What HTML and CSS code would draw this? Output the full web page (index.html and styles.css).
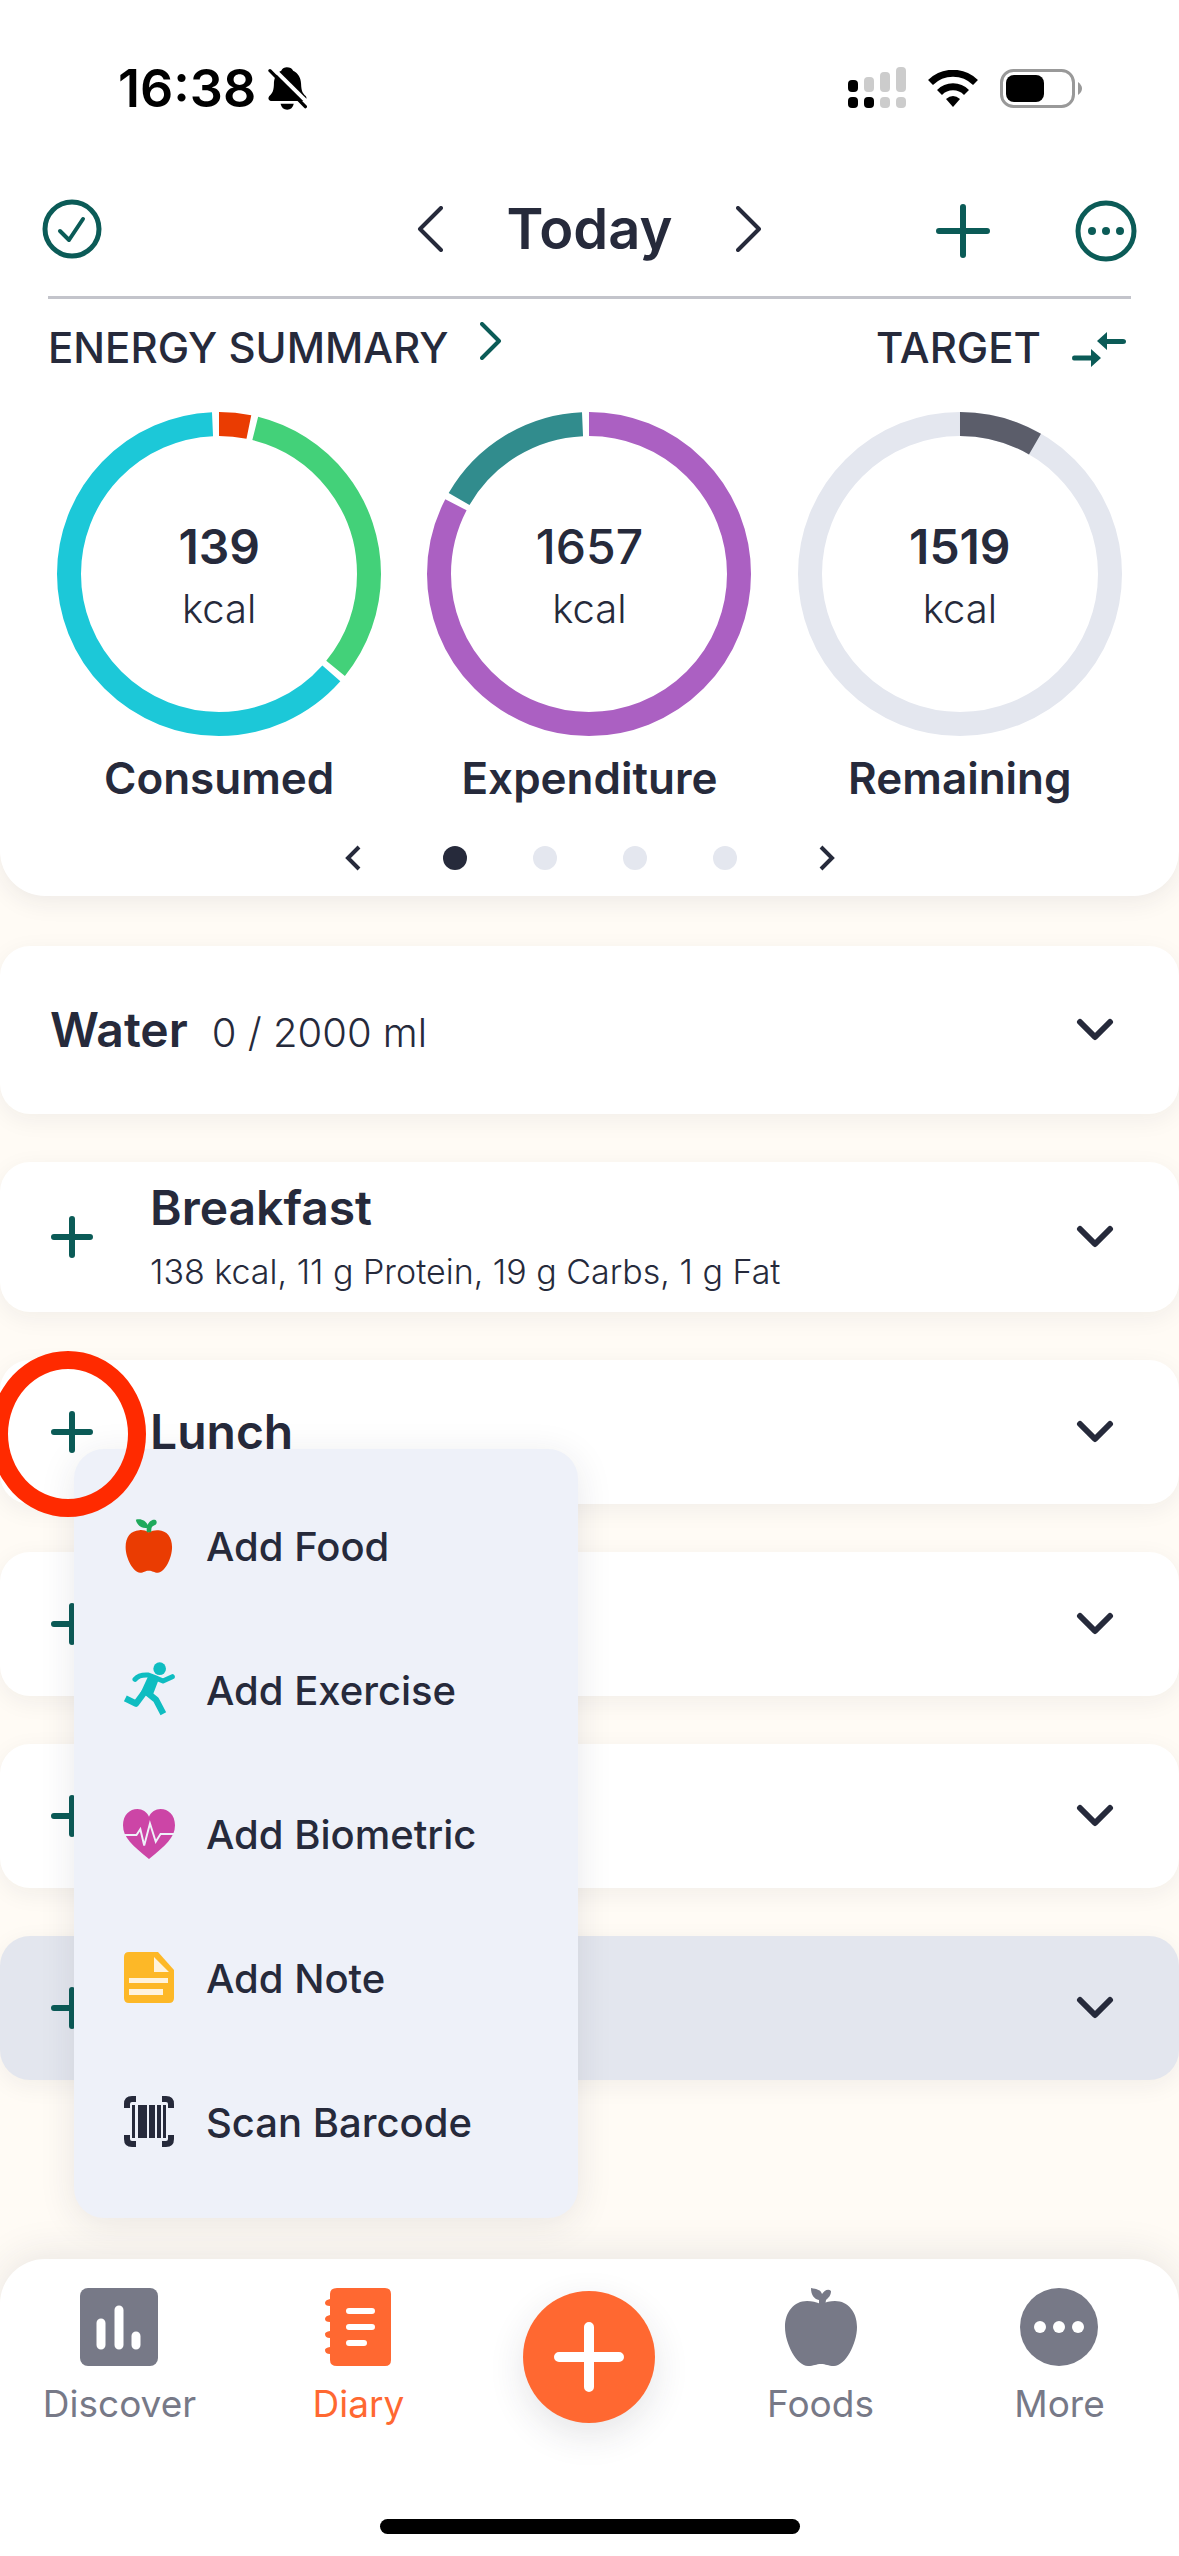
FILE: index.html
```
<!DOCTYPE html>
<html lang="en">
<head>
    <meta charset="UTF-8">
    <meta name="viewport" content="width=device-width, initial-scale=1.0">
    <title>Diary</title>
    <link rel="stylesheet" href="styles.css">
</head>
<body>
    <header class="summary">
        <div class="status-bar">
            <div class="status-left">
                <span class="time">16:38</span>
                <svg width="39" height="43" viewBox="0 0 118 130">
                    <path d="M57 1C66 1 72 4 76 11C92 19 99 33 100 50C101 74 104 78 114 88Q121 98 108 103H8Q-3 98 4 88C14 78 18 72 18 46C20 28 28 17 40 11C44 4 50 1 57 1Z"/>
                    <path d="M38 111H78Q74 129 58 129Q42 129 38 111Z"/>
                    <path d="M12 1L120 108" stroke="#fff" stroke-width="12"/>
                    <path d="M6 11L113 120" stroke="#000" stroke-width="10" stroke-linecap="round"/>
                </svg>
            </div>
            <div class="status-right">
                <svg width="58" height="42" viewBox="0 0 58 42">
                    <g fill="#ccc">
                        <rect x="16" y="10" width="10" height="15" rx="4"/>
                        <rect x="32" y="5" width="10" height="20" rx="4"/>
                        <rect x="48" y="0" width="10" height="25" rx="4"/>
                        <rect x="32" y="30" width="10" height="11" rx="4"/>
                        <rect x="48" y="30" width="10" height="11" rx="4"/>
                    </g>
                    <rect x="0" y="13" width="10" height="12" rx="4"/>
                    <rect x="0" y="30" width="10" height="11" rx="4"/>
                    <rect x="16" y="30" width="10" height="11" rx="4"/>
                </svg>
                <svg width="50" height="37" viewBox="0 0 50 37">
                    <path d="M2.500 12.500A32 32 0 0 1 47.500 12.500" fill="none" stroke="#000" stroke-width="7"/>
                    <path d="M11.500 22.500A19 19 0 0 1 38.500 22.500" fill="none" stroke="#000" stroke-width="7"/>
                    <path d="M18 29Q25 23 32 29L25 37Z"/>
                </svg>
                <svg width="83" height="39" viewBox="0 0 83 39">
                    <rect x="1.500" y="1.500" width="72" height="36" rx="12" fill="none" stroke="#999" stroke-width="3"/>
                    <rect x="6" y="6" width="38" height="27" rx="8"/>
                    <path d="M78 13Q82 16 82 19.500Q82 23 78 26Z" fill="#999"/>
                </svg>
            </div>
        </div>

        <div class="toolbar">
            <button class="icon-button" aria-label="Mark day complete">
                <svg width="60" height="60" viewBox="0 0 60 60" fill="none" stroke="#0b5b57" stroke-width="4" stroke-linecap="round" stroke-linejoin="round">
                    <circle cx="30" cy="30" r="27" stroke-width="5"/>
                    <path d="M18 32L27 41L41 20"/>
                </svg>
            </button>
            <div class="day-picker">
                <button class="icon-button" aria-label="Previous day">
                    <svg width="26" height="46" viewBox="0 0 26 46" fill="none" stroke="#262a3b" stroke-width="4" stroke-linecap="round" stroke-linejoin="round"><path d="M24 2L3 23L24 44"/></svg>
                </button>
                <h1>Today</h1>
                <button class="icon-button" aria-label="Next day">
                    <svg width="26" height="46" viewBox="0 0 26 46" fill="none" stroke="#262a3b" stroke-width="4" stroke-linecap="round" stroke-linejoin="round"><path d="M2 2L23 23L2 44"/></svg>
                </button>
            </div>
            <div class="toolbar-actions">
                <button class="icon-button" aria-label="Add">
                    <svg width="54" height="54" viewBox="0 0 54 54" stroke="#0b5b57" stroke-width="6" stroke-linecap="round"><path d="M27 3V51M3 27H51"/></svg>
                </button>
                <button class="icon-button" aria-label="More options">
                    <svg width="62" height="62" viewBox="0 0 62 62" fill="#0b5b57">
                        <circle cx="31" cy="31" r="28" fill="none" stroke="#0b5b57" stroke-width="5"/>
                        <circle cx="17" cy="31" r="4"/><circle cx="31" cy="31" r="4"/><circle cx="45" cy="31" r="4"/>
                    </svg>
                </button>
            </div>
        </div>
        <hr class="divider">

        <div class="summary-head">
            <a class="summary-link" href="#">ENERGY SUMMARY
                <svg class="raised" width="22" height="38" viewBox="0 0 22 38" fill="none" stroke="#0b5b57" stroke-width="4" stroke-linecap="round" stroke-linejoin="round"><path d="M2 2L19 19L2 36"/></svg>
            </a>
            <button class="target-button">TARGET
                <svg class="lowered" width="56" height="36" viewBox="0 0 56 36" fill="#0b5b57">
                    <path d="M26 9L36 0V7H52Q55 7 55 9.500Q55 12 52 12H36V18Z"/>
                    <path d="M30 26L20 17V23.500H3Q1 23.500 1 26Q1 28.500 3 28.500H20V35Z"/>
                </svg>
            </button>
        </div>

        <div class="rings">
            <figure class="ring">
                <div class="ring-chart">
                    <svg viewBox="0 0 324 324">
                        <g class="arcs">
                            <circle cx="162" cy="162" r="150" pathLength="360" stroke="#ea3c02" stroke-dasharray="11.5 348.5"/>
                            <circle cx="162" cy="162" r="150" pathLength="360" stroke="#43d179" stroke-dasharray="115 245" stroke-dashoffset="-14"/>
                            <circle cx="162" cy="162" r="150" pathLength="360" stroke="#1cc8d8" stroke-dasharray="226 134" stroke-dashoffset="-131.5"/>
                        </g>
                    </svg>
                    <div class="ring-value"><strong>139</strong><span>kcal</span></div>
                </div>
                <figcaption>Consumed</figcaption>
            </figure>
            <figure class="ring">
                <div class="ring-chart">
                    <svg viewBox="0 0 324 324">
                        <g class="arcs">
                            <circle cx="162" cy="162" r="150" pathLength="360" stroke="#ab60c2" stroke-dasharray="297.5 62.5"/>
                            <circle cx="162" cy="162" r="150" pathLength="360" stroke="#318c8d" stroke-dasharray="57.5 302.5" stroke-dashoffset="-300"/>
                        </g>
                    </svg>
                    <div class="ring-value"><strong class="regular">1657</strong><span>kcal</span></div>
                </div>
                <figcaption>Expenditure</figcaption>
            </figure>
            <figure class="ring">
                <div class="ring-chart">
                    <svg viewBox="0 0 324 324">
                        <g class="arcs">
                            <circle cx="162" cy="162" r="150" stroke="#e4e7ef"/>
                            <circle cx="162" cy="162" r="150" pathLength="360" stroke="#5b5d6a" stroke-dasharray="30 330"/>
                        </g>
                    </svg>
                    <div class="ring-value"><strong>1519</strong><span>kcal</span></div>
                </div>
                <figcaption>Remaining</figcaption>
            </figure>
        </div>

        <div class="pager">
            <button class="icon-button" aria-label="Previous page">
                <svg width="16" height="26" viewBox="0 0 16 26" fill="none" stroke="#262a3b" stroke-width="4"><path d="M14 2L3 13L14 24"/></svg>
            </button>
            <div class="dots">
                <span class="dot active"></span>
                <span class="dot"></span>
                <span class="dot"></span>
                <span class="dot"></span>
            </div>
            <button class="icon-button" aria-label="Next page">
                <svg width="16" height="26" viewBox="0 0 16 26" fill="none" stroke="#262a3b" stroke-width="4"><path d="M2 2L13 13L2 24"/></svg>
            </button>
        </div>
    </header>

    <main class="cards">
        <section class="card card-water">
            <div class="water-text"><h2>Water</h2><span>0 / 2000 ml</span></div>
            <button class="icon-button expand" aria-label="Expand"><svg class="chevron" viewBox="0 0 40 24"><path d="M5 4L20 19L35 4"/></svg></button>
        </section>

        <section class="card card-breakfast">
            <button class="icon-button" aria-label="Add"><svg class="plus" viewBox="0 0 44 44"><path d="M22 4V40M4 22H40"/></svg></button>
            <div class="meal-text"><h2>Breakfast</h2><p>138 kcal, 11 g Protein, 19 g Carbs, 1 g Fat</p></div>
            <button class="icon-button expand" aria-label="Expand"><svg class="chevron" viewBox="0 0 40 24"><path d="M5 4L20 19L35 4"/></svg></button>
        </section>

        <section class="card card-open">
            <button class="icon-button" aria-label="Add"><svg class="plus" viewBox="0 0 44 44"><path d="M22 4V40M4 22H40"/></svg></button>
            <h2>Lunch</h2>
            <button class="icon-button expand" aria-label="Expand"><svg class="chevron" viewBox="0 0 40 24"><path d="M5 4L20 19L35 4"/></svg></button>

            <div class="add-menu">
                <button class="menu-item">
                    <svg width="52" height="54" viewBox="-7 0 156 164">
                        <path fill="#ea3c02" d="M70 40C60 35 52 33 42 34C15 35 0 55 0 85C0 120 24 163 44 163C56 163 58 157 70 157C82 157 86 163 98 163C118 163 141 120 141 85C141 55 125 35 100 34C88 33 80 36 70 40Z"/>
                        <path fill="#1fa95c" d="M31 2C46 -3 62 5 67 18C71 8 82 -1 92 4C99 14 89 19 82 22C78 25 78 30 78 40H64V27C48 29 34 18 31 2Z"/>
                    </svg>
                    Add Food
                </button>
                <button class="menu-item">
                    <svg width="52" height="56" viewBox="-2 0 156 166" fill="none" stroke="#0fbdc1" stroke-linecap="round" stroke-linejoin="round">
                        <circle cx="108" cy="19" r="19" fill="#0fbdc1" stroke="none"/>
                        <path d="M34 51Q46 36 74 38L94 46L118 56L146 43" stroke-width="15"/>
                        <path d="M76 46L100 54L84 96L54 94Z" fill="#0fbdc1" stroke-width="8"/>
                        <path d="M72 92L97 112L119 154" stroke-width="19" stroke-linecap="butt"/>
                        <path d="M62 90L37 124L5 108" stroke-width="19" stroke-linecap="butt"/>
                    </svg>
                    Add Exercise
                </button>
                <button class="menu-item">
                    <svg width="52" height="52" viewBox="0 0 54 52">
                        <path fill="#cc45a6" d="M27 52C10 38 0 30 0 17C0 6 7 0 15 0C20 0 25 3 27 8C29 3 34 0 39 0C47 0 54 6 54 17C54 30 44 38 27 52Z"/>
                        <path d="M0 27H14L18 21L22 38L28 15L34 34L39 26H54" fill="none" stroke="#eef1f9" stroke-width="2"/>
                    </svg>
                    Add Biometric
                </button>
                <button class="menu-item">
                    <svg width="52" height="52" viewBox="-1 0 52 52">
                        <path fill="#fdb827" d="M5 0H34L50 18V46Q50 51 45 51H5Q0 51 0 46V5Q0 0 5 0Z"/>
                        <path fill="#fff3dc" d="M30 5L45 20H30ZM5 26H44V31H5ZM5 37H39V43H5Z"/>
                    </svg>
                    Add Note
                </button>
                <button class="menu-item">
                    <svg width="52" height="52" viewBox="-1 0 52 52">
                        <path d="M3 12V8Q3 3 8 3H12M38 3H42Q47 3 47 8V12M47 39V43Q47 48 42 48H38M12 48H8Q3 48 3 43V39" fill="none" stroke="#262a3b" stroke-width="6"/>
                        <path fill="#262a3b" d="M8 9H11V42H8ZM14 9H23V42H14ZM25 9H31V42H25ZM33 9H37V42H33ZM39 9H42V42H39Z"/>
                    </svg>
                    Scan Barcode
                </button>
            </div>
            <span class="highlight"></span>
        </section>

        <section class="card">
            <button class="icon-button" aria-label="Add"><svg class="plus" viewBox="0 0 44 44"><path d="M22 4V40M4 22H40"/></svg></button>
            <button class="icon-button expand" aria-label="Expand"><svg class="chevron" viewBox="0 0 40 24"><path d="M5 4L20 19L35 4"/></svg></button>
        </section>

        <section class="card">
            <button class="icon-button" aria-label="Add"><svg class="plus" viewBox="0 0 44 44"><path d="M22 4V40M4 22H40"/></svg></button>
            <button class="icon-button expand" aria-label="Expand"><svg class="chevron" viewBox="0 0 40 24"><path d="M5 4L20 19L35 4"/></svg></button>
        </section>

        <section class="card card-gray">
            <button class="icon-button" aria-label="Add"><svg class="plus" viewBox="0 0 44 44"><path d="M22 4V40M4 22H40"/></svg></button>
            <button class="icon-button expand" aria-label="Expand"><svg class="chevron" viewBox="0 0 40 24"><path d="M5 4L20 19L35 4"/></svg></button>
        </section>
    </main>

    <footer class="bottom">
        <nav class="tabs">
            <a class="tab" href="#">
                <svg width="78" height="78" viewBox="0 0 78 78">
                    <rect width="78" height="78" rx="8" fill="#777987"/>
                    <path d="M21 35V57M39 22V57M56 48V57" stroke="#fff" stroke-width="9" stroke-linecap="round"/>
                </svg>
                Discover
            </a>
            <a class="tab current" href="#">
                <svg width="78" height="78" viewBox="0 0 78 78">
                    <path fill="#ff6831" d="M18 0H66Q72 0 72 6V72Q72 78 66 78H18Q11 78 11 72V66Q6 66 6 62Q6 60 11 59V50Q6 50 6 46Q6 44 11 43V34Q6 34 6 31Q6 28 11 27V18Q6 18 6 15Q6 12 11 11V6Q11 0 18 0Z"/>
                    <path d="M30 23H53M30 39H53M30 55H45" stroke="#fff" stroke-width="6" stroke-linecap="round"/>
                </svg>
                Diary
            </a>
            <button class="fab" aria-label="Add entry">
                <svg width="80" height="80" viewBox="0 0 80 80" stroke="#fff" stroke-width="10" stroke-linecap="round"><path d="M40 10V70M10 40H70"/></svg>
            </button>
            <a class="tab" href="#">
                <svg width="78" height="78" viewBox="-3 0 78 78" fill="#777987">
                    <path d="M36 16C31 14 27 13 22 13C9 13 0 24 0 39C0 56 12 78 23 78C29 78 31 76 36 76C41 76 43 78 49 78C60 78 72 56 72 39C72 24 63 13 50 13C45 13 41 14 36 16Z"/>
                    <path d="M26 0C32 1 36 2 37 6C39 3 43 0 46 3C46 8 43 10 41 12L40 18H34V12C29 11 26 7 26 0Z"/>
                </svg>
                Foods
            </a>
            <a class="tab" href="#">
                <svg width="78" height="78" viewBox="0 0 78 78">
                    <circle cx="39" cy="39" r="39" fill="#777987"/>
                    <g fill="#fff"><circle cx="20" cy="39" r="6"/><circle cx="39" cy="39" r="6"/><circle cx="58" cy="39" r="6"/></g>
                </svg>
                More
            </a>
        </nav>
        <div class="home-bar"></div>
    </footer>
</body>
</html>
```
FILE: styles.css
```
* { box-sizing: border-box; }
body { margin: 0; min-height: 100vh; display: flex; flex-direction: column; background: #fffbf5; color: #262a3b; font-family: Inter, "Noto Sans", sans-serif; overflow-x: hidden; }
h1, h2, p, figure { margin: 0; }
svg { display: block; flex: none; }
button { padding: 0; border: none; background: none; color: inherit; font: inherit; cursor: pointer; }
a { color: inherit; text-decoration: none; }
.icon-button { display: flex; }

.summary { background: #fff; border-radius: 0 0 45px 45px; box-shadow: 0 6px 24px rgba(38, 42, 59, 0.08); }
.status-bar { display: flex; justify-content: space-between; align-items: center; height: 124px; padding: 52px 96px 0 118px; color: #000; }
.status-left { display: flex; align-items: center; gap: 12px; }
.status-right { display: flex; align-items: center; gap: 22px; }
.time { font-size: 52px; font-weight: 600; }

.toolbar { display: grid; grid-template-columns: 1fr auto 1fr; align-items: center; height: 134px; margin-top: 38px; padding: 0 42px; }
.day-picker { display: flex; align-items: center; gap: 64px; }
.day-picker h1 { font-size: 56px; font-weight: 600; }
.toolbar-actions { display: flex; align-items: center; justify-content: flex-end; gap: 85px; padding-top: 4px; }
.divider { height: 3px; margin: 0 48px; border: none; background: #c3c4cb; }

.summary-head { display: flex; justify-content: space-between; align-items: center; height: 96px; padding: 0 52px 0 48px; font-size: 42px; font-weight: 500; }
.summary-link { display: flex; align-items: center; gap: 32px; }
.raised { margin-bottom: 12px; }
.lowered { margin-top: 6px; }
.target-button { display: flex; align-items: center; gap: 30px; }

.rings { display: grid; grid-template-columns: repeat(3, 1fr); padding: 17px 34px 0; }
.ring { display: flex; flex-direction: column; align-items: center; gap: 12px; }
.ring-chart { display: grid; place-items: center; width: 324px; }
.ring-chart > * { grid-area: 1 / 1; }
.ring-chart svg { width: 100%; }
.arcs { fill: none; stroke-width: 24; transform: rotate(-90deg); transform-origin: center; }
.ring-value { display: flex; flex-direction: column; align-items: center; padding-top: 8px; line-height: 62px; }
.ring-value strong { font-size: 48px; font-weight: 600; }
.ring-value .regular { font-weight: 500; }
.ring-value span { font-size: 40px; font-weight: 300; }
.ring figcaption { font-size: 44px; font-weight: 600; line-height: 60px; }

.pager { display: flex; justify-content: center; align-items: center; gap: 82px; height: 76px; margin-top: 12px; }
.dots { display: flex; gap: 66px; }
.dot { width: 24px; height: 24px; border-radius: 50%; background: #e4e7ef; }
.dot.active { background: #262a3b; }

.cards { display: flex; flex-direction: column; gap: 48px; padding: 50px 0 48px; }
.card { position: relative; display: flex; align-items: center; gap: 56px; min-height: 144px; padding: 0 64px 0 50px; border-radius: 30px; background: #fff; box-shadow: 0 6px 24px rgba(38, 42, 59, 0.06); }
.card h2 { font-size: 48px; font-weight: 600; line-height: 64px; }
.card-water { min-height: 168px; }
.card-breakfast { min-height: 150px; }
.card-open { z-index: 1; }
.card-gray { background: #e3e6ee; }
.expand { margin-left: auto; }
.water-text { display: flex; align-items: baseline; gap: 24px; font-size: 40px; font-weight: 300; }
.meal-text { padding-top: 6px; }
.meal-text p { font-size: 34px; font-weight: 300; line-height: 64px; }
.plus { width: 44px; height: 44px; stroke: #0b5b57; stroke-width: 6; stroke-linecap: round; }
.chevron { width: 40px; height: 24px; fill: none; stroke: #262a3b; stroke-width: 6; stroke-linecap: round; stroke-linejoin: round; }

.add-menu { position: absolute; top: 89px; left: 74px; width: 504px; padding: 25px 0 24px; border-radius: 30px; background: #eef1f9; box-shadow: 0 6px 36px rgba(38, 42, 59, 0.1); }
.menu-item { display: flex; align-items: center; gap: 31px; width: 100%; height: 144px; padding-left: 49px; font-size: 40px; font-weight: 500; }
.highlight { position: absolute; top: -9px; left: -10px; width: 156px; height: 166px; border: 18px solid #ff2a00; border-radius: 50%; pointer-events: none; }

.bottom { margin-top: auto; padding: 29px 0 22px; border-radius: 45px 45px 0 0; background: #fff; box-shadow: 0 -4px 40px rgba(38, 42, 59, 0.1); }
.tabs { display: grid; grid-template-columns: 15fr 15fr 14fr 15fr 15fr; justify-items: center; align-items: start; }
.tab { display: flex; flex-direction: column; align-items: center; gap: 13px; color: #777987; font-size: 37px; line-height: 50px; }
.tab.current { color: #ff6831; }
.fab { display: grid; place-items: center; width: 132px; height: 132px; margin-top: 3px; border-radius: 50%; background: #ff6831; box-shadow: 0 12px 36px rgba(38, 42, 59, 0.12); }
.home-bar { width: 420px; height: 15px; margin: 90px auto 0; border-radius: 8px; background: #000; }
```
